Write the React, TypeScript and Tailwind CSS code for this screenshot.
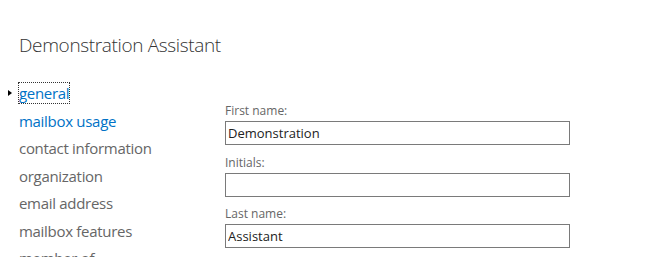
import React from "react";

const navItems = [
  "general",
  "mailbox usage",
  "contact information",
  "organization",
  "email address",
  "mailbox features",
  "member of",
];

const fields = [
  { label: "First name:", value: "Demonstration" },
  { label: "Initials:", value: "" },
  { label: "Last name:", value: "Assistant" },
];

export default function App() {
  return (
    <div className="h-[257px] w-[649px] overflow-hidden bg-white pl-[19px] pt-[31px] font-['Open_Sans',sans-serif]">
      <h1 className="text-[19px] font-light leading-[28px] tracking-[-0.35px] text-[#333]">
        Demonstration Assistant
      </h1>

      <div className="mt-[24px] flex">
        {/* left nav */}
        <ul className="w-[206px] shrink-0">
          {navItems.map((item, i) => (
            <li key={item} className="relative h-[27.5px] text-[15px] leading-[20px] tracking-[-0.3px]">
              {i === 0 && (
                <span className="absolute left-[-11px] top-[7px] h-0 w-0 border-y-[3.5px] border-l-[4px] border-y-transparent border-l-black" />
              )}
              <a
                href="#"
                className={
                  i === 0
                    ? "inline-block text-[#0072c6] outline-1 outline-dotted outline-[#333]"
                    : i === 1
                    ? "text-[#0072c6]"
                    : "text-[#666]"
                }
              >
                {item}
              </a>
            </li>
          ))}
        </ul>

        {/* form */}
        <div className="mt-[18px] flex w-[345px] flex-col gap-[7.5px]">
          {fields.map((f) => (
            <div key={f.label} className="flex flex-col">
              <label className="text-[12px] leading-[20px] text-[#666]">{f.label}</label>
              <input
                type="text"
                readOnly
                value={f.value}
                className="h-[24px] w-full border border-[#7a7a7a] bg-white px-[2px] text-[13px] text-[#222] outline-none"
              />
            </div>
          ))}
        </div>
      </div>
    </div>
  );
}
